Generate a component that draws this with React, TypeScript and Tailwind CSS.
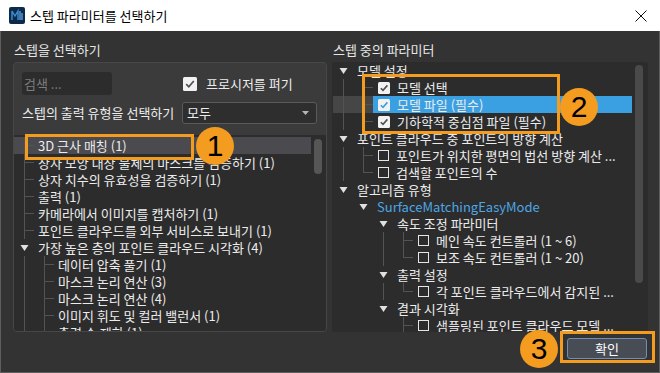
import React from 'react';

const FONT = '"Noto Sans CJK KR", "Noto Sans", sans-serif';

type Kind = 'line' | 'none' | 'tee' | 'elbow' | 'open';
interface Item {
  text: string;
  guides: number[];
  branch: 'tee' | 'elbow' | 'open';
  check?: 'on' | 'off';
  sel?: 'gray' | 'blue';
  blue?: boolean;
}

function BranchCell({ kind }: { kind: Kind }) {
  const c = '#535353';
  return (
    <svg width="20" height="17" viewBox="0 0 20 17" className="shrink-0">
      {kind === 'line' && <line x1="10.5" y1="0" x2="10.5" y2="17" stroke={c} />}
      {kind === 'tee' && (
        <>
          <line x1="10.5" y1="0" x2="10.5" y2="17" stroke={c} />
          <line x1="10.5" y1="8.5" x2="20" y2="8.5" stroke={c} />
        </>
      )}
      {kind === 'elbow' && (
        <>
          <line x1="10.5" y1="0" x2="10.5" y2="9" stroke={c} />
          <line x1="10.5" y1="8.5" x2="20" y2="8.5" stroke={c} />
        </>
      )}
      {kind === 'open' && <polygon points="6.5,6 14.5,6 10.5,12" fill="#e0e0e0" />}
    </svg>
  );
}

function Check({ on, blue }: { on: boolean; blue?: boolean }) {
  if (!on) {
    return <div className="ml-[5px] h-[11px] w-[11px] shrink-0 border border-[#e6e6e6]" />;
  }
  return (
    <svg width="12" height="12" viewBox="0 0 12 12" className="ml-[5px] shrink-0">
      <rect x="0" y="0" width="12" height="12" rx="1.5" fill="#f2f2f2" />
      <path d="M2.8 6.2 L5 8.4 L9.4 3.4" fill="none" stroke={blue ? '#3ba0e2' : '#505050'} strokeWidth="1.6" />
    </svg>
  );
}

function Row({ item }: { item: Item }) {
  const cells: Kind[] = [...item.guides.map((g) => (g ? 'line' : 'none') as Kind), item.branch];
  const leftBg = item.sel === 'gray' ? 'bg-[#4a4a4f]' : item.sel === 'blue' ? 'bg-[#464646]' : '';
  const rightBg = item.sel === 'gray' ? 'bg-[#4a4a4f]' : item.sel === 'blue' ? 'bg-[#3ba0e2]' : '';
  return (
    <div className="flex h-[17px] shrink-0">
      <div className={`flex h-full ${leftBg}`}>
        {cells.map((k, i) => (
          <BranchCell key={i} kind={k} />
        ))}
      </div>
      <div className={`flex h-full min-w-0 flex-1 items-center overflow-hidden ${rightBg}`}>
        {item.check && <Check on={item.check === 'on'} blue={item.sel === 'blue'} />}
        <span
          className={`whitespace-nowrap text-[13px] leading-[17px] ${item.check ? 'pl-[7px]' : 'pl-[4px]'} ${
            item.blue ? 'text-[#4ea6e6]' : 'text-[#ececec]'
          }`}
        >
          {item.text}
        </span>
      </div>
    </div>
  );
}

const leftItems: Item[] = [
  { text: '3D 근사 매칭 (1)', guides: [], branch: 'tee', sel: 'gray' },
  { text: '상자 모양 대상 물체의 마스크를 검증하기 (1)', guides: [], branch: 'tee' },
  { text: '상자 치수의 유효성을 검증하기 (1)', guides: [], branch: 'tee' },
  { text: '출력 (1)', guides: [], branch: 'tee' },
  { text: '카메라에서 이미지를 캡처하기 (1)', guides: [], branch: 'tee' },
  { text: '포인트 클라우드를 외부 서비스로 보내기 (1)', guides: [], branch: 'tee' },
  { text: '가장 높은 층의 포인트 클라우드 시각화 (4)', guides: [], branch: 'open' },
  { text: '데이터 압축 풀기 (1)', guides: [1], branch: 'tee' },
  { text: '마스크 논리 연산 (3)', guides: [1], branch: 'tee' },
  { text: '마스크 논리 연산 (4)', guides: [1], branch: 'tee' },
  { text: '이미지 휘도 및 컬러 밸런서 (1)', guides: [1], branch: 'tee' },
  { text: '출력 수 제한 (1)', guides: [1], branch: 'tee' },
];

const rightItems: Item[] = [
  { text: '모델 설정', guides: [], branch: 'open' },
  { text: '모델 선택', guides: [1], branch: 'tee', check: 'on' },
  { text: '모델 파일 (필수)', guides: [1], branch: 'tee', check: 'on', sel: 'blue' },
  { text: '기하학적 중심점 파일 (필수)', guides: [1], branch: 'elbow', check: 'on' },
  { text: '포인트 클라우드 중 포인트의 방향 계산', guides: [], branch: 'open' },
  { text: '포인트가 위치한 평면의 법선 방향 계산 ...', guides: [1], branch: 'tee', check: 'off' },
  { text: '검색할 포인트의 수', guides: [1], branch: 'elbow', check: 'off' },
  { text: '알고리즘 유형', guides: [], branch: 'open' },
  { text: 'SurfaceMatchingEasyMode', guides: [0], branch: 'open', blue: true },
  { text: '속도 조정 파라미터', guides: [0, 0], branch: 'open' },
  { text: '메인 속도 컨트롤러 (1 ~ 6)', guides: [0, 0, 1], branch: 'tee', check: 'off' },
  { text: '보조 속도 컨트롤러 (1 ~ 20)', guides: [0, 0, 1], branch: 'elbow', check: 'off' },
  { text: '출력 설정', guides: [0, 0], branch: 'open' },
  { text: '각 포인트 클라우드에서 감지된 ...', guides: [0, 0, 1], branch: 'elbow', check: 'off' },
  { text: '결과 시각화', guides: [0, 0], branch: 'open' },
  { text: '샘플링된 포인트 클라우드 모델 ...', guides: [0, 0, 0], branch: 'tee', check: 'off' },
];

function Badge({ n, cls }: { n: string; cls: string }) {
  return (
    <div
      className={`absolute flex h-[38px] w-[38px] items-center justify-center rounded-full bg-[#f39c1f] text-[30px] leading-none text-black ${cls}`}
      style={{ fontFamily: '"Liberation Sans", Arial, sans-serif' }}
    >
      {n}
    </div>
  );
}

export default function App() {
  return (
    <div className="relative flex h-[373px] w-[660px] flex-col overflow-hidden" style={{ fontFamily: FONT }}>
      {/* title bar */}
      <div className="flex h-[31px] shrink-0 items-center bg-white">
        <svg width="16" height="17" viewBox="0 0 16 17" className="ml-[9px]">
          <rect x="0" y="0" width="16" height="17" rx="2" fill="#0d2a4b" />
          <path d="M3 4 L3 13 M3 4 L6 9 L9 4 L9 13" fill="none" stroke="#3f8fd6" strokeWidth="1.4" />
          <path d="M11 4 L11 13 M13 6 L13 13" fill="none" stroke="#6ab3ee" strokeWidth="1.2" />
        </svg>
        <span className="ml-[5px] text-[13px] leading-none text-black">스텝 파라미터를 선택하기</span>
        <div className="flex-1" />
        <svg width="12" height="12" viewBox="0 0 12 12" className="mr-[13px]">
          <path d="M0.5 0.5 L11.5 11.5 M11.5 0.5 L0.5 11.5" stroke="#111" strokeWidth="1" />
        </svg>
      </div>

      {/* body */}
      <div className="flex flex-1 flex-col border-x border-b border-[#5e5e5e] bg-[#333333]">
        <div className="flex h-[301px] shrink-0 gap-[5px] pl-[12px] pr-[11px]">
          {/* left column */}
          <div className="flex w-[314px] flex-col">
            <div className="h-[31px] pl-[1px] pt-[10px] text-[13px] leading-[17px] text-[#e6e6e6]">스텝을 선택하기</div>
            <div className="flex h-[270px] flex-col overflow-hidden rounded-[4px] border border-[#474747] bg-[#3b3b3b]">
              <div className="mt-[9px] flex h-[23px] items-center pl-[8px]">
                <div className="flex h-[23px] w-[90px] items-center rounded-[3px] bg-[#2c2c2c] pl-[2px] text-[13px] text-[#7c7c7c]">
                  검색 ...
                </div>
                <svg width="14" height="14" viewBox="0 0 14 14" className="ml-[71px]">
                  <rect x="0" y="0" width="14" height="14" rx="1.5" fill="#f2f2f2" />
                  <path d="M3.2 7.2 L5.8 9.8 L10.8 4" fill="none" stroke="#505050" strokeWidth="1.7" />
                </svg>
                <span className="ml-[9px] text-[13px] text-[#ececec]">프로시저를 펴기</span>
              </div>
              <div className="mt-[7px] flex h-[22px] items-center pl-[8px]">
                <span className="w-[160px] whitespace-nowrap text-[13px] text-[#ececec]">스텝의 출력 유형을 선택하기</span>
                <div className="flex h-[22px] w-[135px] items-center rounded-[3px] border border-[#5a5a5a] bg-[#2e2e2e] pl-[4px] pr-[7px]">
                  <span className="flex-1 text-[13px] text-[#ececec]">모두</span>
                  <svg width="7" height="4" viewBox="0 0 7 4">
                    <polygon points="0,0 7,0 3.5,4" fill="#b5b5b5" />
                  </svg>
                </div>
              </div>
              <div className="mt-[11px] flex flex-1 overflow-hidden bg-[#2c2c2c]">
                <div className="flex min-w-0 flex-1 flex-col pt-[2px]">
                  {leftItems.map((it, i) => (
                    <Row key={i} item={it} />
                  ))}
                </div>
                <div className="w-[15px] shrink-0 pl-[3px] pt-[4px]">
                  <div className="h-[35px] w-[8px] rounded-[4px] bg-[#565656]" />
                </div>
              </div>
            </div>
          </div>

          {/* right column */}
          <div className="flex flex-1 flex-col">
            <div className="h-[31px] pl-[1px] pt-[10px] text-[13px] leading-[17px] text-[#e6e6e6]">스텝 중의 파라미터</div>
            <div className="flex h-[270px] overflow-hidden rounded-[3px] bg-[#2c2c2c]">
              <div className="flex min-w-0 flex-1 flex-col pl-[1px]">
                {rightItems.map((it, i) => (
                  <Row key={i} item={it} />
                ))}
              </div>
              <div className="w-[16px] shrink-0 pl-[3px] pt-[3px]">
                <div className="h-[218px] w-[8px] rounded-[4px] bg-[#4a4a4a]" />
              </div>
            </div>
          </div>
        </div>

        {/* bottom */}
        <div className="flex flex-1 items-start justify-end pr-[12px] pt-[6px]">
          <div className="flex h-[21px] w-[80px] items-center justify-center rounded-[3px] border border-[#6f8fb3] bg-[#474c55] text-[13px] text-white">
            확인
          </div>
        </div>
      </div>

      {/* annotations */}
      <div className="absolute left-[25px] top-[134px] h-[26px] w-[169px] border-[3px] border-[#f39c1f]" />
      <Badge n="1" cls="left-[196px] top-[127px]" />
      <div className="absolute left-[362px] top-[74px] h-[60px] w-[198px] border-[3px] border-[#f39c1f]" />
      <Badge n="2" cls="left-[560px] top-[88px]" />
      <div className="absolute left-[560px] top-[331px] h-[32px] w-[95px] border-[3px] border-[#f39c1f]" />
      <Badge n="3" cls="left-[520px] top-[330px]" />
    </div>
  );
}
